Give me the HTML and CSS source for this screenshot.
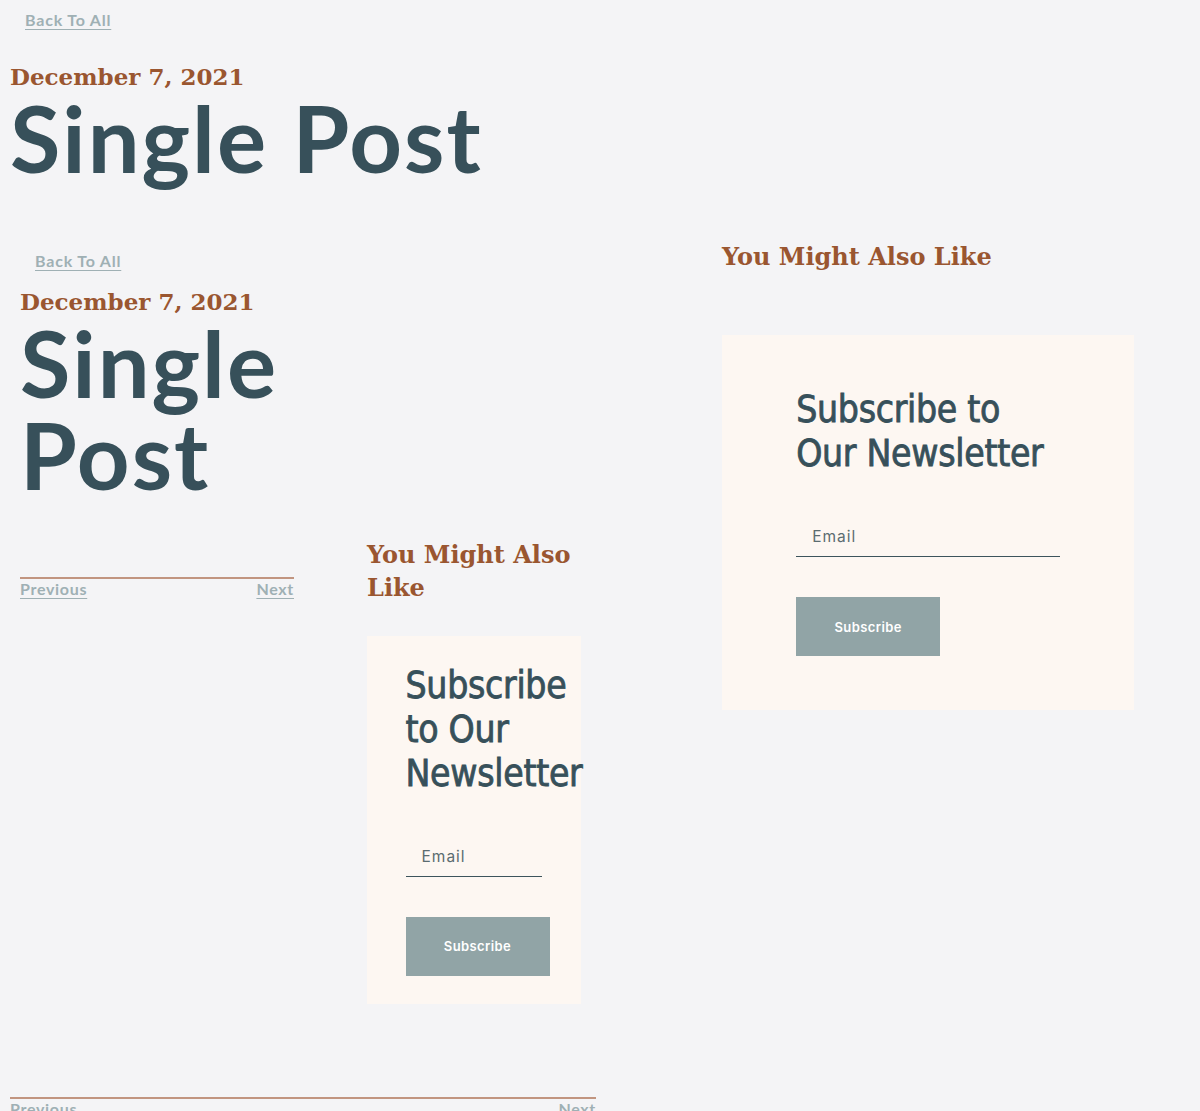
FILE: index.html
```html
<!DOCTYPE html>
<html lang="en">
<head>
<meta charset="utf-8">
<title>Single Post</title>
<link rel="stylesheet" href="styles.css">
</head>
<body>
<div class="page">
  <header class="post-head">
    <a class="back" href="#">Back To All</a>
    <p class="date">December 7, 2021</p>
    <h1 class="title">Single Post</h1>
  </header>

  <div class="layout layout-outer">
    <div class="main">
      <article class="post-nested">
        <a class="back" href="#">Back To All</a>
        <p class="date date-nested">December 7, 2021</p>
        <h1 class="title title-narrow">Single Post</h1>

        <div class="layout layout-inner">
          <div class="main">
            <nav class="postnav">
              <a href="#">Previous</a>
              <a href="#">Next</a>
            </nav>
          </div>
          <aside class="aside">
            <h2 class="aside-title">You Might Also Like</h2>
            <div class="card">
              <h3 class="card-title">Subscribe to Our Newsletter</h3>
              <input class="email" type="email" placeholder="Email">
              <button class="btn" type="button">Subscribe</button>
            </div>
          </aside>
        </div>
      </article>

      <nav class="postnav postnav-outer">
        <a href="#">Previous</a>
        <a href="#">Next</a>
      </nav>
    </div>

    <aside class="aside">
      <h2 class="aside-title">You Might Also Like</h2>
      <div class="card">
        <h3 class="card-title">Subscribe to Our Newsletter</h3>
        <input class="email" type="email" placeholder="Email">
        <button class="btn" type="button">Subscribe</button>
      </div>
    </aside>
  </div>
</div>
</body>
</html>
```

FILE: styles.css
```css
* { box-sizing: border-box; }

html, body {
  margin: 0;
  background: #f4f4f6;
}

body {
  font-family: "Lato", "Open Sans", sans-serif;
  color: #37505a;
}

.page {
  padding: 10px 10px 0;
}

.back {
  display: inline-block;
  margin-left: 15px;
  font-family: "Lato", sans-serif;
  font-weight: 700;
  font-size: 16px;
  letter-spacing: 0.8px;
  line-height: 20px;
  color: #9fb0b4;
  text-decoration: underline;
  text-underline-offset: 3px;
}

.date {
  margin: 32px 0 0;
  font-family: "DejaVu Serif", "Liberation Serif", serif;
  font-weight: 700;
  font-size: 23px;
  line-height: 30px;
  color: #9a5630;
}

.date-nested {
  margin-top: 16px;
}

.title {
  margin: 0;
  font-family: "Lato", sans-serif;
  font-weight: 700;
  font-size: 92px;
  letter-spacing: 2px;
  line-height: 92px;
  color: #37505a;
}

.title-narrow {
  max-width: 300px;
}

.layout {
  display: grid;
  align-items: start;
}

.layout-outer {
  grid-template-columns: 586px 412px;
  column-gap: 126px;
  margin-top: 56px;
}

.layout-inner {
  grid-template-columns: 274px 214px;
  column-gap: 73px;
  margin-top: 37px;
}

.post-nested {
  padding: 11px 10px 0;
}

.postnav {
  display: flex;
  justify-content: space-between;
  margin-top: 39px;
  border-top: 2px solid #c19580;
}

.postnav a {
  font-family: "Lato", sans-serif;
  font-weight: 700;
  font-size: 16px;
  letter-spacing: 0.7px;
  line-height: 20px;
  color: #9fb0b4;
  text-decoration: underline;
  text-underline-offset: 3px;
}

.postnav-outer {
  margin-top: 93px;
}

.aside-title {
  margin: 0 0 15%;
  font-family: "DejaVu Serif", "Liberation Serif", serif;
  font-weight: 700;
  font-size: 24px;
  line-height: 33px;
  color: #9a5630;
}

.card {
  background: #fdf7f2;
  padding: 13% 18%;
}

.card-title {
  margin: 0;
  font-family: "DejaVu Sans Condensed", "DejaVu Sans", sans-serif;
  font-weight: 400;
  font-size: 37px;
  letter-spacing: -0.3px;
  line-height: 44px;
  color: #37505a;
  -webkit-text-stroke: 0.8px #37505a;
}

.email {
  display: block;
  width: 100%;
  height: 40px;
  margin-top: 41px;
  padding: 0 0 0 16px;
  border: 0;
  border-bottom: 1px solid #3d545c;
  background: transparent;
  font-family: "Inter", "Open Sans", sans-serif;
  font-size: 15.5px;
  letter-spacing: 1px;
  color: #3d545c;
  outline: none;
}

.email::placeholder {
  color: #5b6c70;
}

.btn {
  display: block;
  width: 144px;
  height: 59px;
  margin-top: 40px;
  border: 0;
  background: #91a4a6;
  color: #ffffff;
  font-family: "Inter", "Open Sans", sans-serif;
  font-weight: 600;
  font-size: 13px;
  letter-spacing: 0.4px;
  cursor: pointer;
}
```
